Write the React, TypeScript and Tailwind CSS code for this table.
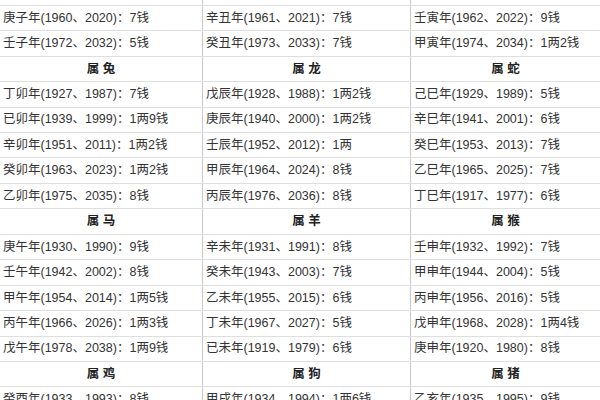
const rows: (string[] | { head: string[] })[] = [
  ["", "", ""],
  ["庚子年(1960、2020)：7钱", "辛丑年(1961、2021)：7钱", "壬寅年(1962、2022)：9钱"],
  ["壬子年(1972、2032)：5钱", "癸丑年(1973、2033)：7钱", "甲寅年(1974、2034)：1两2钱"],
  { head: ["属 兔", "属 龙", "属 蛇"] },
  ["丁卯年(1927、1987)：7钱", "戊辰年(1928、1988)：1两2钱", "己巳年(1929、1989)：5钱"],
  ["已卯年(1939、1999)：1两9钱", "庚辰年(1940、2000)：1两2钱", "辛巳年(1941、2001)：6钱"],
  ["辛卯年(1951、2011)：1两2钱", "壬辰年(1952、2012)：1两", "癸巳年(1953、2013)：7钱"],
  ["癸卯年(1963、2023)：1两2钱", "甲辰年(1964、2024)：8钱", "乙巳年(1965、2025)：7钱"],
  ["乙卯年(1975、2035)：8钱", "丙辰年(1976、2036)：8钱", "丁巳年(1917、1977)：6钱"],
  { head: ["属 马", "属 羊", "属 猴"] },
  ["庚午年(1930、1990)：9钱", "辛未年(1931、1991)：8钱", "壬申年(1932、1992)：7钱"],
  ["壬午年(1942、2002)：8钱", "癸未年(1943、2003)：7钱", "甲申年(1944、2004)：5钱"],
  ["甲午年(1954、2014)：1两5钱", "乙未年(1955、2015)：6钱", "丙申年(1956、2016)：5钱"],
  ["丙午年(1966、2026)：1两3钱", "丁未年(1967、2027)：5钱", "戊申年(1968、2028)：1两4钱"],
  ["戊午年(1978、2038)：1两9钱", "已未年(1919、1979)：6钱", "庚申年(1920、1980)：8钱"],
  { head: ["属 鸡", "属 狗", "属 猪"] },
  ["癸酉年(1933、1993)：8钱", "甲戌年(1934、1994)：1两6钱", "乙亥年(1935、1995)：9钱"],
];

export default function App() {
  return (
    <div
      className="w-[600px] h-[400px] overflow-hidden bg-white text-[#333] text-[12.5px]"
      style={{ fontFamily: '"Liberation Sans", "Noto Sans CJK SC", sans-serif' }}
    >
      <div className="-mt-[19.6px]">
        {rows.map((r, i) => {
          const isHead = !Array.isArray(r);
          const cells = isHead ? r.head : r;
          return (
            <div
              key={i}
              className="grid grid-cols-[203px_208px_1fr] h-[25.45px] border-b border-[#dedede]"
            >
              {cells.map((c, j) => (
                <div
                  key={j}
                  className={`flex items-center ${j < 2 ? "border-r border-[#c9c9c9]" : ""} ${
                    isHead ? "justify-center font-bold text-[#222]" : "pl-[3px]"
                  }`}
                >
                  {c}
                </div>
              ))}
            </div>
          );
        })}
      </div>
    </div>
  );
}
